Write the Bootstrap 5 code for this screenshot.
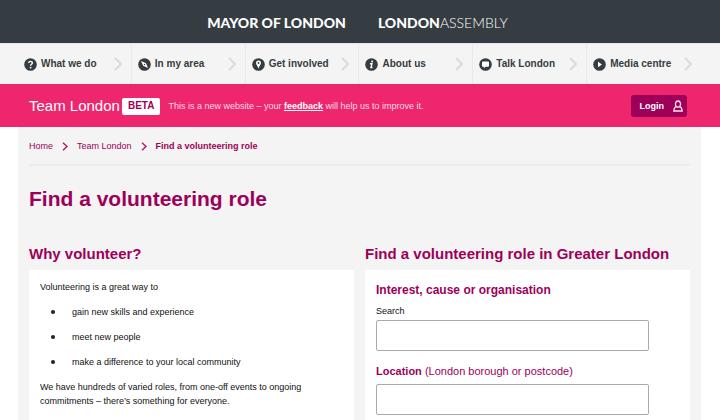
<!DOCTYPE html>
<html lang="en">
<head>
<meta charset="utf-8">
<meta name="viewport" content="width=device-width, initial-scale=1">
<title>Find a volunteering role</title>
<link href="https://cdn.jsdelivr.net/npm/bootstrap@5.3.0/dist/css/bootstrap.min.css" rel="stylesheet">
<style>
:root { --slate: #353d42; --pink: #ee266d; --plum: #9e0059; --pale: #f4f4f4; }
body { font-family: "Liberation Sans", Arial, sans-serif; font-size: 9px; line-height: 14px; color: #111; }
a { color: inherit; text-decoration: none; }
.shell { margin-left: 18px; margin-right: 19px; }
.inset { padding-left: 11px; padding-right: 11px; }
.masthead { background: var(--slate); height: 43px; padding: 3px 5px 0 0; gap: 32px; font-family: Lato, sans-serif; font-size: 14px; color: #fff; }
.masthead .heavy { font-weight: 900; }
.masthead .thin { font-weight: 300; }
.menu-bar { background: #f4f4f4; border-top: 1px solid #e6e6e8; }
.menu-bar a { height: 40px; padding: 0 9px 0 6px; gap: 4px; font-size: 10px; font-weight: 700; color: var(--slate); white-space: nowrap; border-right: 1px solid #e9e9ea; }
.menu-bar li:last-child a { border-right: 0; }
.menu-bar li { flex: 1 1 0; min-width: 0; }
.banner { background: var(--pink); height: 43px; padding-top: 1px; color: #fff; }
.brand { font-size: 15px; }
.beta { background: #fff; color: var(--plum); font-size: 10px; font-weight: 700; border-radius: 2px; padding: 1px 6px 2px; margin: 0 8px 0 2px; }
.banner p { color: #fbdce8; }
.banner p a { color: #fff; font-weight: 700; text-decoration: underline; }
.login { background: var(--plum); color: #fff; font-size: 9px; font-weight: 700; line-height: 14px; border: 0; border-radius: 3px; padding: 4px 4px 4px 9px; gap: 9px; margin-right: 3px; }
.page { background: var(--pale); min-height: calc(100vh - 127px); }
.crumbs { padding: 12px 0 11px; gap: 9px; color: var(--plum); border-bottom: 2px solid #ececec; }
h1, h2, h3, .location { color: var(--plum); }
h1 { font-size: 21px; line-height: 28px; font-weight: 700; margin: 19px 0 31px; }
h2 { font-size: 15px; line-height: 20px; font-weight: 700; margin: 0 0 6px; }
h3 { font-size: 12px; line-height: 20px; font-weight: 700; margin: 0 0 4px; }
label { display: block; margin-bottom: 2px; }
.location { font-size: 11px; line-height: 16px; margin: 12px 0 5px; }
.columns { gap: 11px; }
.columns section { flex: 1 1 0; min-width: 0; }
.panel { background: #fff; padding: 10px 11px; }
.panel p { margin: 0 0 11px; }
.panel ul { margin: 0; padding-left: 11px; list-style: none; }
.panel li { display: flex; gap: 17px; margin-bottom: 11px; align-items: center; }
.panel li::before { content: ""; width: 4px; height: 4px; border-radius: 50%; background: #222; }
.field { width: 90%; height: 31px; border: 1px solid #a8abad; border-radius: 2px; padding: 4px 8px; display: block; background: #fff; }
</style>
<script src="https://cdn.jsdelivr.net/npm/bootstrap@5.3.0/dist/js/bootstrap.bundle.min.js" defer></script>
</head>
<body>
<svg class="d-none" xmlns="http://www.w3.org/2000/svg">
<symbol id="arrow" viewBox="0 0 8 14"><path d="M1 1l6 6-6 6" fill="none" stroke="#d9dbdc" stroke-width="2"/></symbol>
<symbol id="crumb" viewBox="0 0 6 9"><path d="M1 .7l4 3.800-4 3.800" fill="none" stroke="#a81a68" stroke-width="1.400"/></symbol>
</svg>
<header>
<div class="masthead d-flex justify-content-center align-items-center">
<a href="#" class="heavy">MAYOR OF LONDON</a>
<a href="#"><span class="heavy">LONDON</span><span class="thin">ASSEMBLY</span></a>
</div>
<nav class="menu-bar" aria-label="Main">
<ul class="shell list-unstyled d-flex mb-0">
<li><a href="#" class="d-flex align-items-center"><svg width="13" height="13" viewBox="0 0 13 13"><circle cx="6.5" cy="6.5" r="6.3" fill="#353d42"/><path d="M4.7 5.1c0-2.4 3.8-2.3 3.6 0C8.2 6.3 6.6 6.3 6.6 7.7" fill="none" stroke="#fff" stroke-width="1.4"/><circle cx="6.6" cy="9.6" r=".9" fill="#fff"/></svg>What we do<svg class="ms-auto" width="8" height="14"><use href="#arrow"/></svg></a></li>
<li><a href="#" class="d-flex align-items-center"><svg width="13" height="13" viewBox="0 0 13 13"><circle cx="6.5" cy="6.5" r="6.3" fill="#353d42"/><path d="M3 3l5 2.300L10 10 5.200 7.700z" fill="#fff"/><circle cx="6.5" cy="6.500" r=".7" fill="#353d42"/></svg>In my area<svg class="ms-auto" width="8" height="14"><use href="#arrow"/></svg></a></li>
<li><a href="#" class="d-flex align-items-center"><svg width="13" height="13" viewBox="0 0 13 13"><circle cx="6.5" cy="6.5" r="6.300" fill="#353d42"/><path d="M6.500 10.700C5.900 8.200 4 7 4 5.100a2.500 2.500 0 0 1 5 0C9 7 7.100 8.200 6.500 10.700z" fill="#fff"/><circle cx="6.500" cy="5" r=".9" fill="#353d42"/></svg>Get involved<svg class="ms-auto" width="8" height="14"><use href="#arrow"/></svg></a></li>
<li><a href="#" class="d-flex align-items-center"><svg width="13" height="13" viewBox="0 0 13 13"><circle cx="6.5" cy="6.5" r="6.3" fill="#353d42"/><circle cx="7.100" cy="3.500" r="1" fill="#fff"/><path d="M5 5.700h1.900L6 9.500h1.500" fill="none" stroke="#fff" stroke-width="1.400"/></svg>About us<svg class="ms-auto" width="8" height="14"><use href="#arrow"/></svg></a></li>
<li><a href="#" class="d-flex align-items-center"><svg width="13" height="13" viewBox="0 0 13 13"><circle cx="6.5" cy="6.5" r="6.3" fill="#353d42"/><path d="M4 3.500h5q1 0 1 1v3.300q0 1-1 1H6.500L4.800 10.300V8.800H4q-1 0-1-1V4.500q0-1 1-1z" fill="#fff"/></svg>Talk London<svg class="ms-auto" width="8" height="14"><use href="#arrow"/></svg></a></li>
<li><a href="#" class="d-flex align-items-center"><svg width="13" height="13" viewBox="0 0 13 13"><circle cx="6.5" cy="6.5" r="6.3" fill="#353d42"/><path d="M5 3.800l4 2.700-4 2.700z" fill="#fff"/></svg>Media centre<svg class="ms-auto" width="8" height="14"><use href="#arrow"/></svg></a></li>
</ul>
</nav>
<div class="banner d-flex align-items-center">
<div class="shell inset d-flex align-items-center flex-grow-1">
<a href="#" class="brand">Team London</a><span class="beta">BETA</span>
<p class="mb-0">This is a new website – your <a href="#">feedback</a> will help us to improve it.</p>
<button type="button" class="login d-flex align-items-center ms-auto">Login<svg width="10" height="12" viewBox="0 0 10 12"><path d="M3.400 6.600C1.500 4.500 2.500 1 5 1s3.500 3.500 1.600 5.600C8.300 7 9 8.500 9.200 11H.8C1 8.500 1.700 7 3.400 6.600q1.600 1 3.200 0" fill="none" stroke="#fbe3ee" stroke-width="1.300"/></svg></button>
</div>
</div>
</header>
<main class="page shell inset">
<nav class="crumbs d-flex align-items-center" aria-label="Breadcrumb">
<a href="#">Home</a><svg width="6" height="9"><use href="#crumb"/></svg>
<a href="#">Team London</a><svg width="6" height="9"><use href="#crumb"/></svg>
<strong>Find a volunteering role</strong>
</nav>
<h1>Find a volunteering role</h1>
<div class="columns d-flex">
<section class="d-flex flex-column">
<h2>Why volunteer?</h2>
<div class="panel flex-grow-1">
<p>Volunteering is a great way to</p>
<ul><li>gain new skills and experience</li><li>meet new people</li><li>make a difference to your local community</li></ul>
<p class="mb-0">We have hundreds of varied roles, from one-off events to ongoing commitments – there’s something for everyone.</p>
</div>
</section>
<section class="d-flex flex-column">
<h2>Find a volunteering role in Greater London</h2>
<form class="panel flex-grow-1">
<h3>Interest, cause or organisation</h3>
<label for="search">Search</label>
<input id="search" type="text" class="field">
<label for="location" class="location"><strong>Location</strong> (London borough or postcode)</label>
<input id="location" type="text" class="field">
</form>
</section>
</div>
</main>
</body>
</html>
